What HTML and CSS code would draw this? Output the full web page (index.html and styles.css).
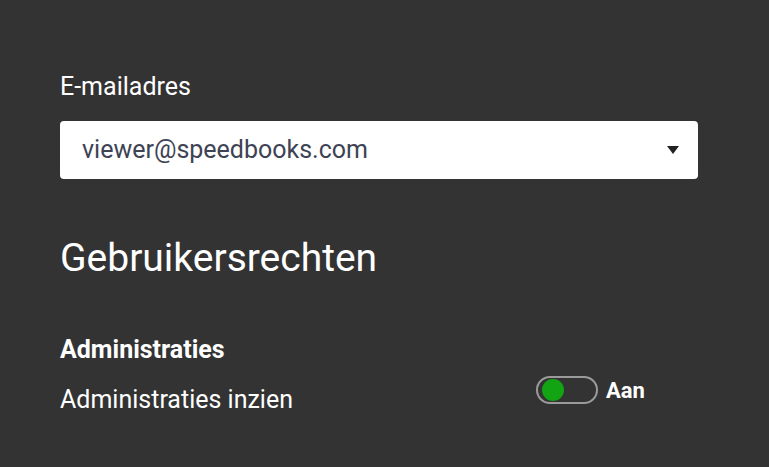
FILE: index.html
```html
<!DOCTYPE html>
<html lang="nl">
<head>
<meta charset="utf-8">
<title>Gebruikersrechten</title>
<link rel="stylesheet" href="styles.css">
</head>
<body>
<main class="page">
  <label class="field-label">E-mailadres</label>
  <div class="select">
    <span class="select-value">viewer@speedbooks.com</span>
    <svg class="select-arrow" width="12" height="8" viewBox="0 0 12 8"><path d="M0 0H12L6 8Z" fill="#222"/></svg>
  </div>
  <h1 class="section-title">Gebruikersrechten</h1>
  <h2 class="group-title">Administraties</h2>
  <div class="perm-row">
    <span class="perm-label">Administraties inzien</span>
    <div class="toggle-wrap">
      <span class="toggle"><span class="knob"></span></span>
      <span class="toggle-text">Aan</span>
    </div>
  </div>
</main>
</body>
</html>
```
FILE: styles.css
```css
html, body {
  margin: 0;
  padding: 0;
  background: #333333;
}
body {
  font-family: Roboto, "Liberation Sans", sans-serif;
  color: #ffffff;
  width: 769px;
  height: 467px;
  overflow: hidden;
}
.page {
  padding: 72px 71px 0 60px;
  display: flex;
  flex-direction: column;
}
.field-label {
  display: block;
  font-size: 25px;
  line-height: 30px;
}
.select {
  margin-top: 19px;
  height: 58px;
  background: #ffffff;
  border-radius: 4px;
  display: flex;
  align-items: center;
  justify-content: space-between;
  padding: 0 19px 0 22px;
}
.select-value {
  font-size: 25px;
  line-height: 30px;
  color: #3d4354;
}
.select-arrow {
  display: block;
}
.section-title {
  margin: 55px 0 0;
  font-size: 39px;
  line-height: 48px;
  font-weight: 400;
}
.group-title {
  margin: 53px 0 0;
  font-size: 25px;
  line-height: 30px;
  font-weight: 700;
}
.perm-row {
  margin-top: 11px;
  display: flex;
  align-items: flex-start;
}
.perm-label {
  width: 476px;
  margin-top: 9px;
  font-size: 25px;
  line-height: 30px;
}
.toggle-wrap {
  display: flex;
  align-items: center;
  gap: 8px;
}
.toggle {
  box-sizing: border-box;
  width: 62px;
  height: 28px;
  border: 2px solid #9b9b9b;
  border-radius: 14px;
  display: flex;
  align-items: center;
  padding-left: 4px;
}
.knob {
  width: 22px;
  height: 22px;
  border-radius: 50%;
  background: #12a412;
}
.toggle-text {
  font-size: 22px;
  font-weight: 700;
}
```
